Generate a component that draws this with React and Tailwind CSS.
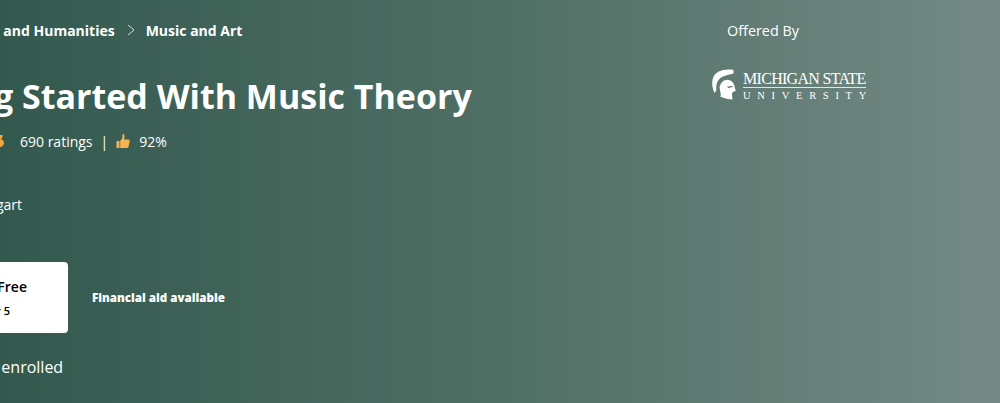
const OPEN = "font-['Open_Sans',sans-serif]";

function Chevron() {
  return (
    <svg width="8" height="12" viewBox="0 0 8 12" fill="none" stroke="currentColor" strokeWidth="1" className="mx-[12px] opacity-80">
      <path d="M1 1l6 5-6 5" />
    </svg>
  );
}

function ThumbUp() {
  return (
    <svg width="14" height="15" viewBox="0 0 14 15" fill="#f5b451">
      <path d="M0.5 7h3v7h-3zM4.200 7l2.200-3V0.800c0-.5.4-.8.9-.7.8.2 1.200 1 1.200 2v1.100L8 5.600h4.400c.9 0 1.500.8 1.300 1.600l-1.200 5.600c-.2.7-.8 1.200-1.500 1.200H4.200z" />
    </svg>
  );
}

function Helmet() {
  return (
    <svg width="25" height="31" viewBox="0 0 25 31" fill="#ffffff" fillRule="evenodd" className="shrink-0">
      <path d="M21.500 1C12.500-.5 3.500 2 1 9c-1.500 4.500-.8 10 1.500 15l1.800-2.500C4 16 5 11 9.500 8.300 13 6.300 18 5.300 21.500 4.500z" />
      <path d="M7.500 18.500C8.500 13.500 12 10.800 15.500 10.800c4 0 7 3.700 7.500 8.700l.9 2-3.900 2.300.4 6.700-4.800-.5-7.200-2.200c1-2.500-.3-5.500-.9-9.300zM15 17.500l5.500-.5.300 1.100-4.500.9z" />
    </svg>
  );
}

export default function App() {
  return (
    <div className={`${OPEN} relative h-[403px] w-[1000px] overflow-hidden bg-gradient-to-r from-[#33594e] via-[#4f6f65] to-[#758a85] text-white`}>
      <div className="flex h-full">
        {/* left column runs off the page on purpose */}
        <div className="ml-[-113px] w-[773px] shrink-0 pt-[20px]">
          <div className="flex h-[20px] items-center text-[14px] font-bold whitespace-nowrap">
            <span>Browse</span>
            <Chevron />
            <span>Arts and Humanities</span>
            <Chevron />
            <span className="-ml-px">Music and Art</span>
          </div>

          <h1 className="mt-[33px] text-[34px] leading-[46px] font-bold whitespace-nowrap">Getting Started With Music Theory</h1>

          <div className="mt-[12px] flex h-[20px] items-center text-[14px] whitespace-nowrap">
            {/* sliver of the last rating icon at the page edge */}
            <svg width="4" height="14" viewBox="0 0 4 14" fill="#f5a63f" className="ml-[113px] shrink-0">
              <path d="M0 1h2.500v2L1 5.500c2 0 3 2 3 3.500s-1.500 4-4 4z" />
            </svg>
            <span className="ml-[16px]">690 ratings</span>
            <span className="mx-[8px]">|</span>
            <ThumbUp />
            <span className="ml-[9px]">92%</span>
          </div>

          <div className="mt-[44px] ml-[-4px] h-[20px] text-[14px] leading-[20px] whitespace-nowrap">Taught by: Joe Bogart</div>

          <div className="mt-[47px] flex items-center">
            <div className="flex h-[71px] w-[181px] flex-col items-end justify-center rounded-[4px] bg-white text-black">
              <span className="pr-[41px] text-[14px] leading-[20px] font-semibold whitespace-nowrap">Enroll for Free</span>
              <span className="mt-[7px] pr-[58px] text-[11px] leading-[14px] font-semibold whitespace-nowrap">Starts Apr 5</span>
            </div>
            <span className="ml-[24px] text-[11.600px] font-extrabold whitespace-nowrap">Financial aid available</span>
          </div>

          <div className="mt-[23px] ml-px text-[16px] leading-[22px] whitespace-nowrap">12,345 already enrolled</div>
        </div>

        <div className="ml-[52px] flex flex-col pt-[21px]">
          <div className="ml-[15px] h-[20px] text-[14.400px] leading-[20px]">Offered By</div>
          <div className="mt-[28px] flex items-start">
            <Helmet />
            <div className="ml-[6px] w-[123px] font-['Liberation_Serif',serif] leading-none whitespace-nowrap">
              <div className="border-b border-white/80 pt-[2px] text-[16px] tracking-[-0.7px]">MICHIGAN STATE</div>
              <div className="mt-[3px] text-[10.500px] tracking-[6.700px]">UNIVERSITY</div>
            </div>
          </div>
        </div>
      </div>
    </div>
  );
}
